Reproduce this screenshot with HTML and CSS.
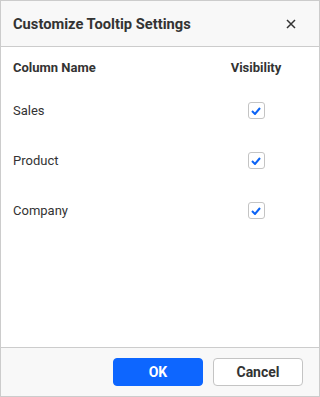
FILE: index.html
```html
<!DOCTYPE html>
<html lang="en">
<head>
    <meta charset="UTF-8">
    <meta name="viewport" content="width=device-width, initial-scale=1.0">
    <title>Customize Tooltip Settings</title>
    <link rel="stylesheet" href="styles.css">
</head>
<body>
    <div class="dialog">
        <header class="dialog-header">
            <h1>Customize Tooltip Settings</h1>
            <button class="close" type="button" aria-label="Close">
                <svg width="10" height="10" viewBox="0 0 10 10">
                    <path d="M1 1 L9 9 M9 1 L1 9" stroke="#333" stroke-width="1.5" fill="none"/>
                </svg>
            </button>
        </header>

        <main class="dialog-content">
            <div class="row head">
                <span>Column Name</span>
                <span class="vis">Visibility</span>
            </div>
            <div class="row">
                <span>Sales</span>
                <span class="vis"><span class="check"><svg width="10" height="8" viewBox="0 0 10 8"><path d="M1 4 L4 7 L9 1" stroke="#0b63f6" stroke-width="2" fill="none"/></svg></span></span>
            </div>
            <div class="row">
                <span>Product</span>
                <span class="vis"><span class="check"><svg width="10" height="8" viewBox="0 0 10 8"><path d="M1 4 L4 7 L9 1" stroke="#0b63f6" stroke-width="2" fill="none"/></svg></span></span>
            </div>
            <div class="row">
                <span>Company</span>
                <span class="vis"><span class="check"><svg width="10" height="8" viewBox="0 0 10 8"><path d="M1 4 L4 7 L9 1" stroke="#0b63f6" stroke-width="2" fill="none"/></svg></span></span>
            </div>
        </main>

        <footer class="dialog-footer">
            <button type="button" class="btn primary">OK</button>
            <button type="button" class="btn">Cancel</button>
        </footer>
    </div>
</body>
</html>
```

FILE: styles.css
```css
html, body {
    margin: 0;
    padding: 0;
    background: #fff;
}
body {
    font-family: Roboto, "Noto Sans", Arial, sans-serif;
    color: #333;
}
.dialog {
    box-sizing: border-box;
    width: 320px;
    height: 397px;
    border: 1px solid #cccccc;
    display: flex;
    flex-direction: column;
}
.dialog-header {
    box-sizing: border-box;
    height: 46px;
    background: #f8f8f8;
    border-bottom: 1px solid #cccccc;
    display: flex;
    align-items: center;
    justify-content: space-between;
    padding: 0 18px 0 12px;
}
.dialog-header h1 {
    margin: 0;
    font-size: 14.7px;
    font-weight: bold;
    color: #333;
}
.close {
    border: none;
    background: none;
    padding: 0;
    width: 20px;
    height: 20px;
    display: flex;
    align-items: center;
    justify-content: center;
    cursor: pointer;
}
.dialog-content {
    flex: 1;
    padding: 12px 38px 0 12px;
}
.row {
    display: flex;
    align-items: center;
    justify-content: space-between;
    height: 17px;
    margin-bottom: 33px;
    font-size: 13px;
}
.row.head {
    font-weight: bold;
    font-size: 13px;
    margin-bottom: 26px;
}
.vis {
    width: 50px;
    display: flex;
    justify-content: center;
}
.check {
    box-sizing: border-box;
    width: 17px;
    height: 17px;
    border: 1px solid #c4c4c4;
    border-radius: 3px;
    display: flex;
    align-items: center;
    justify-content: center;
}
.dialog-footer {
    box-sizing: border-box;
    height: 49px;
    background: #f8f8f8;
    border-top: 1px solid #cccccc;
    display: flex;
    justify-content: flex-end;
    align-items: center;
    gap: 10px;
    padding: 0 16px;
}
.btn {
    box-sizing: border-box;
    width: 90px;
    height: 28px;
    border: 1px solid #c4c4c4;
    border-radius: 4px;
    background: #fff;
    color: #333;
    font-family: Roboto, Arial, sans-serif;
    font-size: 14px;
    font-weight: bold;
}
.btn.primary {
    background: #0d66ff;
    border-color: #0d66ff;
    color: #fff;
}
```
